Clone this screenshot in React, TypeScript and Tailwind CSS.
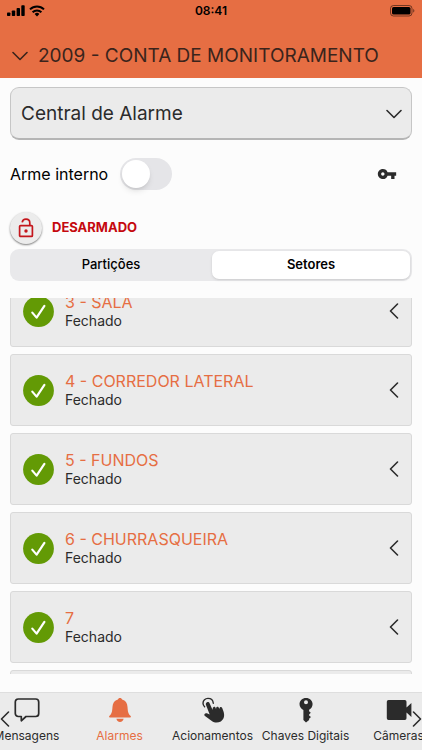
import React, { useEffect, useRef, useState } from 'react'
import { MdVpnKey } from 'react-icons/md'

type IconProps = { className?: string }

const ChevronDown: React.FC<IconProps> = ({ className }) => (
  <svg viewBox="0 0 16 10" fill="none" stroke="currentColor" strokeWidth="1.6" strokeLinecap="round" strokeLinejoin="round" className={className} aria-hidden="true">
    <path d="M1 1.5 8 8.5 15 1.5" />
  </svg>
)

const ChevronLeft: React.FC<IconProps> = ({ className }) => (
  <svg viewBox="0 0 10 16" fill="none" stroke="currentColor" strokeWidth="1.6" strokeLinecap="round" strokeLinejoin="round" className={className} aria-hidden="true">
    <path d="M8.5 1 1.5 8 8.5 15" />
  </svg>
)

const ChevronRight: React.FC<IconProps> = ({ className }) => (
  <svg viewBox="0 0 10 16" fill="none" stroke="currentColor" strokeWidth="1.6" strokeLinecap="round" strokeLinejoin="round" className={className} aria-hidden="true">
    <path d="M1.5 1 8.5 8 1.5 15" />
  </svg>
)

const SignalIcon = () => (
  <svg viewBox="0 0 18 12" fill="currentColor" className="w-[18px] h-3" aria-hidden="true">
    <rect x="0" y="7.5" width="3.4" height="3.5" rx="0.8" />
    <rect x="4.8" y="5.5" width="3.4" height="5.5" rx="0.8" />
    <rect x="9.6" y="3" width="3.4" height="8" rx="0.8" />
    <rect x="14.3" y="0.2" width="3.4" height="10.8" rx="0.8" />
  </svg>
)

const WifiIcon = () => (
  <svg viewBox="0 0 16 12" fill="none" stroke="currentColor" strokeWidth="2" className="w-4 h-3" aria-hidden="true">
    <path d="M1 4.4a10 10 0 0 1 14 0" />
    <path d="M3.6 7.2a6.3 6.3 0 0 1 8.8 0" />
    <path d="M8 11.4 5.6 9a3.4 3.4 0 0 1 4.8 0Z" fill="currentColor" stroke="none" />
  </svg>
)

const BatteryIcon = () => (
  <svg viewBox="0 0 25 12" className="w-[25px] h-3" aria-hidden="true">
    <rect x="0.5" y="0.5" width="21.5" height="10.5" rx="3" fill="none" stroke="#000" strokeOpacity="0.5" />
    <rect x="2" y="2" width="18.5" height="7.5" rx="1.6" />
    <path d="M23.2 4v3.6c.7-.3 1.2-1 1.2-1.8s-.5-1.5-1.2-1.8Z" fillOpacity="0.5" />
  </svg>
)

const UnlockIcon = () => (
  <svg viewBox="0 0 16 20" fill="none" stroke="currentColor" strokeWidth="1.7" className="w-4 h-5" aria-hidden="true">
    <rect x="1.6" y="7.6" width="12.8" height="10.8" rx="1" />
    <path d="M4.2 4.4C4.5 2.4 6 1.2 8 1.2c2.2 0 3.8 1.5 3.8 3.7v2.7" />
    <circle cx="8" cy="13" r="1.7" fill="currentColor" stroke="none" />
  </svg>
)

const CheckIcon = () => (
  <svg viewBox="0 0 31 31" className="w-[31px] h-[31px] shrink-0" aria-hidden="true">
    <circle cx="15.5" cy="15.5" r="15.4" fill="#639a05" />
    <path d="m9.3 16.6 4.3 5 7.8-11.8" fill="none" stroke="#fff" strokeWidth="2.2" strokeLinecap="round" strokeLinejoin="round" />
  </svg>
)

const ChatIcon = () => (
  <svg viewBox="0 0 26 26" fill="none" stroke="currentColor" strokeWidth="1.7" strokeLinejoin="round" className="w-[26px] h-[26px]" aria-hidden="true">
    <path d="M4.3 2h17.4a3 3 0 0 1 3 3v11.500a3 3 0 0 1-3 3H12l-4.700 4.300v-4.300h-3a3 3 0 0 1-3-3V5a3 3 0 0 1 3-3Z" />
  </svg>
)

const BellIcon = () => (
  <svg viewBox="0 0 26 26" fill="currentColor" className="w-[26px] h-[26px]" aria-hidden="true">
    <path d="M13 .9c-1.100 0-1.900.7-2.100 1.700C7.500 3.500 5.700 6.200 5.500 9.800c-.3 5.200-.8 7.200-3.200 9.300-.5.5-.2 1.300.5 1.300h20.400c.7 0 1-.8.5-1.300-2.400-2.100-2.900-4.100-3.200-9.300-.2-3.600-2-6.300-5.400-7.200C14.900 1.600 14.100.9 13 .9Z" />
    <path d="M9.400 21.800h7.200c-.3 1.900-1.700 3.100-3.600 3.100s-3.300-1.200-3.600-3.100Z" />
  </svg>
)

const TouchIcon = () => (
  <svg viewBox="0 0 26 26" className="w-[26px] h-[26px]" aria-hidden="true">
    <path d="M4.600 9.800A5 5 0 0 1 3 6.300 4.900 4.900 0 0 1 8 1.400c2.800 0 5 2 5.300 4.800" fill="none" stroke="currentColor" strokeWidth="1.4" strokeLinecap="round" />
    <path
      d="M7 5.300c1-.5 2.200 0 2.700 1.100l2.700 6.200.3-.1c-.2-1.500.3-2.400 1.100-2.600.9-.2 1.500.3 1.900 1.400l.4 1c-.1-1.500.3-2.400 1.100-2.600.9-.2 1.500.4 1.900 1.500l.4 1c-.1-1.200.3-1.900 1-2.100.8-.2 1.400.3 1.800 1.200l1.200 3.300c1.400 4.200.5 8-2.700 9.800-2.900 1.600-6.300 1.500-9-.4l-6.500-4.700c-1-.7-1.200-1.700-.7-2.400.6-.8 1.700-.9 2.900-.4l2.200 1L6 8c-.5-1.100 0-2.200 1-2.700Z"
      fill="currentColor"
    />
  </svg>
)

const KeyIcon = () => (
  <svg viewBox="0 0 26 26" fill="currentColor" className="w-[26px] h-[26px]" aria-hidden="true">
    <path
      fillRule="evenodd"
      d="M13 .9c3.700 0 6.600 2.700 6.600 6.200 0 2.600-1.400 4.700-3.500 5.700v1.400l1.700 1.500-1.700 1.700v1l1.900 1.600-1.900 1.800v1.300L13 25.400l-2.600-2.300V12.900C8.100 12 6.500 9.800 6.500 7.100 6.500 3.600 9.400.9 13 .9Zm0 2.300a2 2 0 1 0 0 4 2 2 0 0 0 0-4Z"
    />
  </svg>
)

const CameraIcon = () => (
  <svg viewBox="0 0 26 26" fill="currentColor" className="w-[26px] h-[26px]" aria-hidden="true">
    <path d="M2.500 3h16.300a1.700 1.700 0 0 1 1.700 1.700v5.800l4.900-4.600v14.200l-4.900-4.600v5.800a1.700 1.700 0 0 1-1.700 1.700H2.500A1.700 1.700 0 0 1 .8 21.300V4.700A1.700 1.700 0 0 1 2.500 3Z" />
  </svg>
)

const SECTORS = [
  { id: 3, name: '3 - SALA' },
  { id: 4, name: '4 - CORREDOR LATERAL' },
  { id: 5, name: '5 - FUNDOS' },
  { id: 6, name: '6 - CHURRASQUEIRA' },
  { id: 7, name: '7' },
]

const TABS = [
  { label: 'Mensagens', Icon: ChatIcon },
  { label: 'Alarmes', Icon: BellIcon },
  { label: 'Acionamentos', Icon: TouchIcon },
  { label: 'Chaves Digitais', Icon: KeyIcon },
  { label: 'Câmeras', Icon: CameraIcon },
]

const App: React.FC = () => {
  const [view, setView] = useState('Setores')
  const [tab, setTab] = useState('Alarmes')
  const listRef = useRef<HTMLUListElement>(null)
  const tabsRef = useRef<HTMLDivElement>(null)

  useEffect(() => {
    if (listRef.current) listRef.current.scrollTop = 23
    if (tabsRef.current) tabsRef.current.scrollLeft = 20
  }, [])

  return (
    <div className="h-screen flex flex-col bg-[#fcfcfc] text-[#2b2b2b] font-['Inter',sans-serif]">

      {/* Header */}
      <header className="bg-[#e66e43] shrink-0">
        <div className="grid grid-cols-3 items-center h-[22px] px-[7px] text-black">
          <div className="flex items-center gap-1">
            <SignalIcon />
            <WifiIcon />
          </div>
          <span className="text-center text-xs font-semibold">08:41</span>
          <div className="flex justify-end">
            <BatteryIcon />
          </div>
        </div>
        <button className="flex items-center gap-2.5 w-full h-14 pt-3 px-3 text-left text-[#3a241c]">
          <ChevronDown className="w-4 h-2.5 shrink-0" />
          <h1 className="text-[19px] whitespace-nowrap">2009 - CONTA DE MONITORAMENTO</h1>
        </button>
      </header>

      <main className="flex-1 min-h-0 flex flex-col px-2.5 pt-[9px] pb-[18px]">

        {/* Device picker */}
        <div className="relative shrink-0">
          <select
            aria-label="Dispositivo"
            className="appearance-none w-full h-[53px] pt-0.5 px-2.5 rounded-[9px] border border-[#c6c6c6] border-b-2 border-b-[#b5b5b5] bg-[#ebebeb] text-[19px]"
          >
            <option>Central de Alarme</option>
          </select>
          <ChevronDown className="absolute right-2.5 top-[22px] w-4 h-2.5 pointer-events-none" />
        </div>

        <div className="flex items-center justify-between shrink-0 mt-4 h-9">
          <label className="flex items-center gap-3 text-base text-black">
            Arme interno
            <input type="checkbox" className="peer sr-only" />
            <span className="flex items-center w-[52px] h-8 p-0.5 rounded-full bg-[#e5e5e8] peer-checked:bg-[#639a05] peer-checked:justify-end">
              <span className="w-7 h-7 rounded-full bg-white shadow-md" />
            </span>
          </label>
          <button aria-label="Senha" className="pr-[15px]">
            <MdVpnKey className="w-5 h-5" />
          </button>
        </div>

        {/* Status */}
        <div className="flex items-center gap-2.5 shrink-0 mt-5 h-8">
          <button aria-label="Armar" className="flex items-center justify-center w-8 h-8 rounded-full bg-[#ececec] text-[#c4161c] shadow-[0_1px_2px_rgba(0,0,0,0.5)]">
            <UnlockIcon />
          </button>
          <strong className="text-[13px] font-bold text-[#c5090f]">DESARMADO</strong>
        </div>

        <div className="grid grid-cols-2 gap-0.5 shrink-0 mt-[5px] h-8 p-0.5 rounded-[9px] bg-[#e9e9eb] text-[13px] text-black">
          {['Partições', 'Setores'].map((name) => (
            <button
              key={name}
              onClick={() => setView(name)}
              className={view === name ? 'rounded-[7px] bg-white font-semibold shadow-sm' : 'font-medium'}
            >
              {name}
            </button>
          ))}
        </div>

        {/* Sectors */}
        <ul ref={listRef} className="flex-1 min-h-0 mt-[17px] flex flex-col gap-[7px] overflow-y-auto [scrollbar-width:none]">
          {SECTORS.map((s) => (
            <li key={s.id} className="shrink-0">
              <button className="flex items-center gap-[11px] w-full h-[72px] px-3 rounded-[3px] border border-[#d9d9d9] bg-[#ebebeb] text-left">
                <CheckIcon />
                <span className="flex-1">
                  <span className="block text-base leading-5 text-[#e66e43]">{s.name}</span>
                  <span className="block text-sm leading-[18px]">Fechado</span>
                </span>
                <ChevronLeft className="w-2.5 h-4" />
              </button>
            </li>
          ))}
          <li aria-hidden="true" className="shrink-0 h-[72px] rounded-[3px] border border-[#d9d9d9] bg-[#ebebeb]" />
        </ul>
      </main>

      {/* Bottom tabs */}
      <nav className="relative shrink-0 border-t border-[#dedede] bg-[#ebebeb]">
        <div ref={tabsRef} className="flex overflow-x-auto [scrollbar-width:none]">
          {TABS.map(({ label, Icon }) => (
            <button
              key={label}
              onClick={() => setTab(label)}
              className={`flex flex-col items-center gap-[5px] shrink-0 w-[93px] h-[57px] pt-1 ${tab === label ? 'text-[#e66e43]' : 'text-[#2b2b2b]'}`}
            >
              <Icon />
              <span className="text-xs leading-4 whitespace-nowrap">{label}</span>
            </button>
          ))}
        </div>
        <ChevronLeft className="absolute left-0 top-[18px] w-2.5 h-4 pointer-events-none" />
        <ChevronRight className="absolute right-0 top-[18px] w-2.5 h-4 pointer-events-none" />
      </nav>
    </div>
  )
}

export default App
